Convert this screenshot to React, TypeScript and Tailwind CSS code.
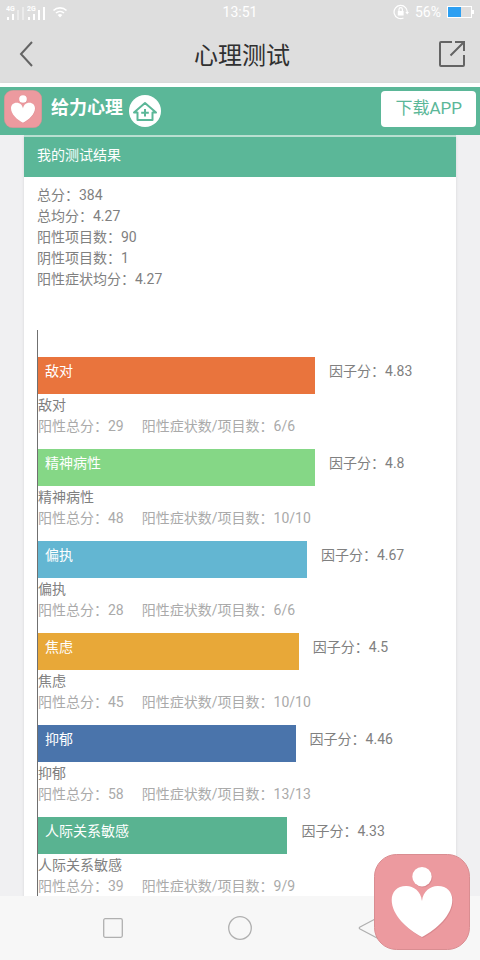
import React from 'react';

interface Factor {
  name: string;
  score: string;
  total: number;
  count: string;
  width: number;
  color: string;
}

const factors: Factor[] = [
  { name: '敌对', score: '4.83', total: 29, count: '6/6', width: 68.4, color: 'bg-[#e9743d]' },
  { name: '精神病性', score: '4.8', total: 48, count: '10/10', width: 68.4, color: 'bg-[#85d786]' },
  { name: '偏执', score: '4.67', total: 28, count: '6/6', width: 66.4, color: 'bg-[#63b6d2]' },
  { name: '焦虑', score: '4.5', total: 45, count: '10/10', width: 64.4, color: 'bg-[#e8a838]' },
  { name: '抑郁', score: '4.46', total: 58, count: '13/13', width: 63.6, color: 'bg-[#4a74ab]' },
  { name: '人际关系敏感', score: '4.33', total: 39, count: '9/9', width: 61.6, color: 'bg-[#59b391]' },
];

const summary = [
  { label: '总分', value: '384' },
  { label: '总均分', value: '4.27' },
  { label: '阳性项目数', value: '90' },
  { label: '阴性项目数', value: '1' },
  { label: '阳性症状均分', value: '4.27' },
];

function HeartLogo({ className }: { className: string }) {
  return (
    <svg viewBox="0 0 96 96" className={className} aria-hidden="true">
      <rect x="0.5" y="0.5" width="95" height="95" rx="22" fill="#ec9a9f" stroke="#d98d91" />
      <g fill="#c9777e" opacity="0.5" transform="translate(0.8 1)">
        <circle cx="48" cy="22.7" r="9.7" />
        <path d="M48 47C45 35 38 31.7 32 32C23 32 17.7 38 17.7 46C17.7 61 33 75 48 83C63 75 78.3 61 78.3 46C78.3 38 73 32 64 32C58 31.7 51 35 48 47Z" />
      </g>
      <g fill="#fff">
        <circle cx="48" cy="22.7" r="9.7" />
        <path d="M48 47C47 37 39 31.7 32 32C23 32 17.7 38 17.7 46C17.7 61 33 75 48 83C63 75 78.3 61 78.3 46C78.3 38 73 32 64 32C57 31.7 49 37 48 47Z" />
      </g>
    </svg>
  );
}

function Signal({ label, active }: { label: string; active: number }) {
  return (
    <svg viewBox="0 0 18 15" className="h-[15px] w-[18px]" fill="#fff" aria-hidden="true">
      <text x="0" y="6" fontSize="7" fontWeight="700">
        {label}
      </text>
      {[3, 6, 10, 13].map((h, i) => (
        <rect key={h} x={1 + i * 5} y={15 - h} width="2" height={h} opacity={i < active ? 1 : 0.4} />
      ))}
    </svg>
  );
}

function StatusBar() {
  return (
    <div className="grid h-6 shrink-0 grid-cols-3 items-center px-1.5 text-[14px] text-white">
      <div className="flex items-center gap-[3px]">
        <Signal label="4G" active={2} />
        <Signal label="2G" active={4} />
        <svg viewBox="0 0 16 12" className="ml-1 h-3 w-4" fill="none" stroke="currentColor" strokeWidth="1.6" aria-hidden="true">
          <path d="M1.5 4.5C5 1 11 1 14.5 4.5M4 7C6.3 4.9 9.7 4.9 12 7" />
          <path d="M5.7 9C7 7.8 9 7.8 10.3 9L8 11.4Z" fill="currentColor" stroke="none" />
        </svg>
      </div>
      <span className="text-center">13:51</span>
      <div className="flex items-center justify-end gap-1.5">
        <svg viewBox="0 0 16 16" className="size-4" fill="none" stroke="currentColor" strokeWidth="1.2" aria-hidden="true">
          <path d="M10.5 14A6.6 6.6 0 1 1 14.2 9" />
          <path d="M12.4 8H16L14.2 10.4Z" fill="currentColor" stroke="none" />
          <rect x="4.8" y="7" width="5.8" height="4.5" fill="currentColor" stroke="none" />
          <path d="M6 7V5.4A1.7 1.7 0 0 1 9.4 5.4V7" />
        </svg>
        <span>56%</span>
        <svg viewBox="0 0 27 12" className="h-3 w-[27px]" aria-hidden="true">
          <rect x="0.5" y="0.5" width="24" height="11" fill="none" stroke="#fff" />
          <rect x="1" y="1" width="13" height="10" fill="#2c9ff2" />
          <rect x="25" y="4" width="2" height="4" fill="#fff" />
        </svg>
      </div>
    </div>
  );
}

function TitleBar() {
  return (
    <header className="grid h-[59px] shrink-0 grid-cols-[1fr_auto_1fr] items-center pr-3.5 pl-[18px] text-[#646464]">
      <button type="button" aria-label="返回" className="justify-self-start">
        <svg viewBox="0 0 16 28" className="h-7 w-4" fill="none" stroke="currentColor" strokeWidth="2" aria-hidden="true">
          <path d="M14 2L3 14L14 26" />
        </svg>
      </button>
      <h1 className="pt-1 text-[24px] leading-8 text-[#303030]">心理测试</h1>
      <button type="button" aria-label="分享" className="justify-self-end">
        <svg viewBox="0 0 28 28" className="size-7" fill="none" stroke="currentColor" strokeWidth="2" aria-hidden="true">
          <path d="M14 2H3Q2 2 2 3V25Q2 26 3 26H25Q26 26 26 25V15" />
          <path d="M17 2H26V11M26 2L12.5 15.5" />
        </svg>
      </button>
    </header>
  );
}

function BrandBar() {
  return (
    <div className="flex h-[52px] shrink-0 items-center border-t-4 border-white bg-[#5bb798] px-1 shadow-sm">
      <HeartLogo className="mb-1 size-[38px]" />
      <span className="ml-[9px] pb-1.5 text-[18px] leading-6 font-bold text-white">给力心理</span>
      <a href="#home" aria-label="首页" className="ml-1.5">
        <svg viewBox="0 0 32 32" className="size-8" aria-hidden="true">
          <circle cx="16" cy="16" r="16" fill="#fff" />
          <g fill="none" stroke="#5bb798" strokeWidth="2" strokeLinejoin="round">
            <path d="M8.5 25V17.5H5L16 8L27 17.5H23.5V25Z" />
            <path d="M16 14V21.5M12.2 17.7H19.8" />
          </g>
        </svg>
      </a>
      <a
        href="#download"
        className="mb-1 ml-auto flex h-9 items-center rounded-sm bg-white px-3.5 text-[17px] text-[#5bb798]"
      >
        下载APP
      </a>
    </div>
  );
}

function FactorRow({ factor }: { factor: Factor }) {
  return (
    <li className="pb-3">
      <div className="flex h-[37px] leading-[21px]">
        <div className={`${factor.color} pt-1 pl-[7px] text-white`} style={{ width: `${factor.width}%` }}>
          {factor.name}
        </div>
        <span className="pt-1 pl-3.5">因子分：{factor.score}</span>
      </div>
      <p className="pt-px">{factor.name}</p>
      <p className="flex gap-[18px] text-[#aaaaaa]">
        <span>阳性总分：{factor.total}</span>
        <span>阳性症状数/项目数：{factor.count}</span>
      </p>
    </li>
  );
}

function NavBar() {
  return (
    <nav className="grid h-16 shrink-0 grid-cols-[1fr_auto_1fr] items-center bg-[#f7f7f7] text-[#b0b0b0]">
      <button type="button" aria-label="最近任务" className="mr-[105px] justify-self-end">
        <svg viewBox="0 0 20 20" className="size-5" fill="none" stroke="currentColor" strokeWidth="1.3" aria-hidden="true">
          <rect x="0.7" y="0.7" width="18.6" height="18.6" rx="1.5" />
        </svg>
      </button>
      <button type="button" aria-label="主页">
        <svg viewBox="0 0 24 24" className="size-6" fill="none" stroke="currentColor" strokeWidth="1.3" aria-hidden="true">
          <circle cx="12" cy="12" r="11.3" />
        </svg>
      </button>
      <button type="button" aria-label="后退" className="ml-[106px] justify-self-start">
        <svg viewBox="0 0 22 24" className="h-6 w-[22px]" fill="none" stroke="currentColor" strokeWidth="1.3" aria-hidden="true">
          <path d="M20 1.5L2 11Q0.5 12 2 13L20 22.5Z" strokeLinejoin="round" />
        </svg>
      </button>
    </nav>
  );
}

export default function App() {
  return (
    <div className="flex h-screen flex-col bg-[#dedede] font-[Roboto,'Noto_Sans_CJK_SC',sans-serif]">
      <StatusBar />
      <TitleBar />
      <BrandBar />
      <main className="min-h-0 flex-1 overflow-hidden bg-[#f0f0f2] px-6 text-[14px] leading-[21px] text-[#808080]">
        <section className="min-h-full border-t-2 border-[#b9dfd1] bg-white shadow">
          <h2 className="h-10 bg-[#5bb798] px-[13px] pt-2 text-white">我的测试结果</h2>
          <div className="px-[13px] pt-2">
            {summary.map((item) => (
              <p key={item.label}>
                {item.label}：{item.value}
              </p>
            ))}
            <ul className="mt-10 border-l border-[#707070] pt-[27px]">
              {factors.map((factor) => (
                <FactorRow key={factor.name} factor={factor} />
              ))}
            </ul>
          </div>
        </section>
      </main>
      <NavBar />
      <button type="button" aria-label="给力心理" className="fixed right-2.5 bottom-2.5">
        <HeartLogo className="size-24" />
      </button>
    </div>
  );
}
